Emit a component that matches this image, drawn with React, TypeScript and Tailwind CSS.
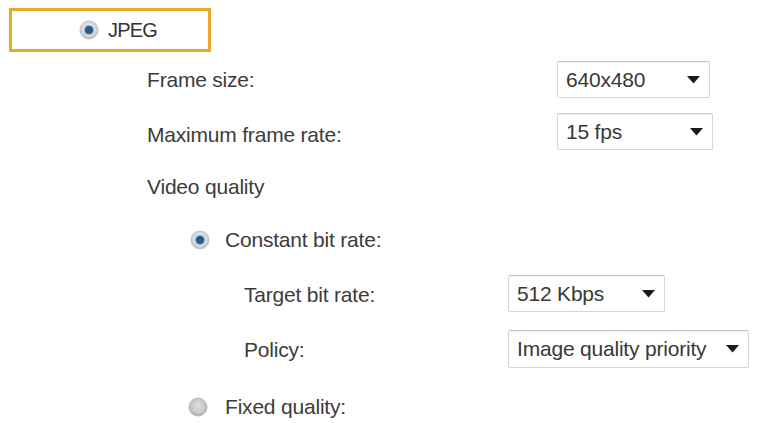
import React from "react";

function Radio({ checked }: { checked?: boolean }) {
  const id = checked ? "rg-on" : "rg-off";
  return (
    <svg width="20" height="20" viewBox="0 0 20 20" className="shrink-0">
      <defs>
        <radialGradient id={id} cx="50%" cy="45%" r="55%">
          <stop offset="0%" stopColor={checked ? "#eef1f4" : "#e2e2e2"} />
          <stop offset="70%" stopColor={checked ? "#d3d9df" : "#c8c8c8"} />
          <stop offset="100%" stopColor={checked ? "#aeb8c2" : "#a4a4a4"} />
        </radialGradient>
      </defs>
      <circle cx="10" cy="10" r="9" fill={`url(#${id})`} stroke={checked ? "#b7c0c8" : "#bdbdbd"} strokeWidth="1" />
      {checked && (
        <>
          <circle cx="10" cy="10" r="5" fill="#9fb3c6" />
          <circle cx="10" cy="10" r="4" fill="#2c5b88" />
        </>
      )}
    </svg>
  );
}

function Select({ value, width }: { value: string; width: string }) {
  return (
    <div
      className={`flex h-full items-center justify-between rounded-[2px] border border-[#d6d6d6] border-t-[#c6c6c6] bg-white pl-[8px] pr-[9px] shadow-[inset_0_1px_1px_rgba(0,0,0,0.06)] ${width}`}
    >
      <span className="text-[21px] tracking-[-0.2px] text-[#383838]">{value}</span>
      <svg width="13" height="8" viewBox="0 0 13 8">
        <path d="M0 0 H13 L6.5 7.5 Z" fill="#1a1a1a" />
      </svg>
    </div>
  );
}

function Label({ children }: { children: React.ReactNode }) {
  return <span className="text-[21px] tracking-[-0.2px] text-[#3c3c3c]">{children}</span>;
}

export default function App() {
  return (
    <div
      className="h-[423px] w-[762px] overflow-hidden bg-white pt-[8px]"
      style={{ fontFamily: '"Liberation Sans", Arial, sans-serif' }}
    >
      <div className="ml-[9px] flex h-[44px] w-[202px] items-center border-[3px] border-[#e8a82a] pl-[67px]">
        <Radio checked />
        <span className="ml-[9px] text-[20px] tracking-[-0.8px] text-[#333]">JPEG</span>
      </div>

      <div className="mt-[9px] flex h-[37px] items-center">
        <div className="w-[557px] pl-[147px]">
          <Label>Frame size:</Label>
        </div>
        <Select value="640x480" width="w-[153px]" />
      </div>

      <div className="mt-[15px] flex h-[37px] items-center">
        <div className="w-[557px] pl-[147px] pt-[6px]">
          <Label>Maximum frame rate:</Label>
        </div>
        <Select value="15 fps" width="w-[156px]" />
      </div>

      <div className="mt-[22px] flex h-[30px] items-center pl-[147px]">
        <Label>Video quality</Label>
      </div>

      <div className="mt-[23px] flex h-[30px] items-center pl-[190px]">
        <Radio checked />
        <span className="ml-[15px]">
          <Label>Constant bit rate:</Label>
        </span>
      </div>

      <div className="mt-[20px] flex h-[37px] items-center">
        <div className="w-[508px] pl-[244px] pt-[2px]">
          <Label>Target bit rate:</Label>
        </div>
        <Select value="512 Kbps" width="w-[157px]" />
      </div>

      <div className="mt-[18px] flex h-[38px] items-center">
        <div className="w-[508px] pl-[244px] pt-[2px]">
          <Label>Policy:</Label>
        </div>
        <Select value="Image quality priority" width="w-[241px]" />
      </div>

      <div className="mt-[24px] flex h-[30px] items-center pl-[188px]">
        <Radio />
        <span className="ml-[17px]">
          <Label>Fixed quality:</Label>
        </span>
      </div>
    </div>
  );
}
